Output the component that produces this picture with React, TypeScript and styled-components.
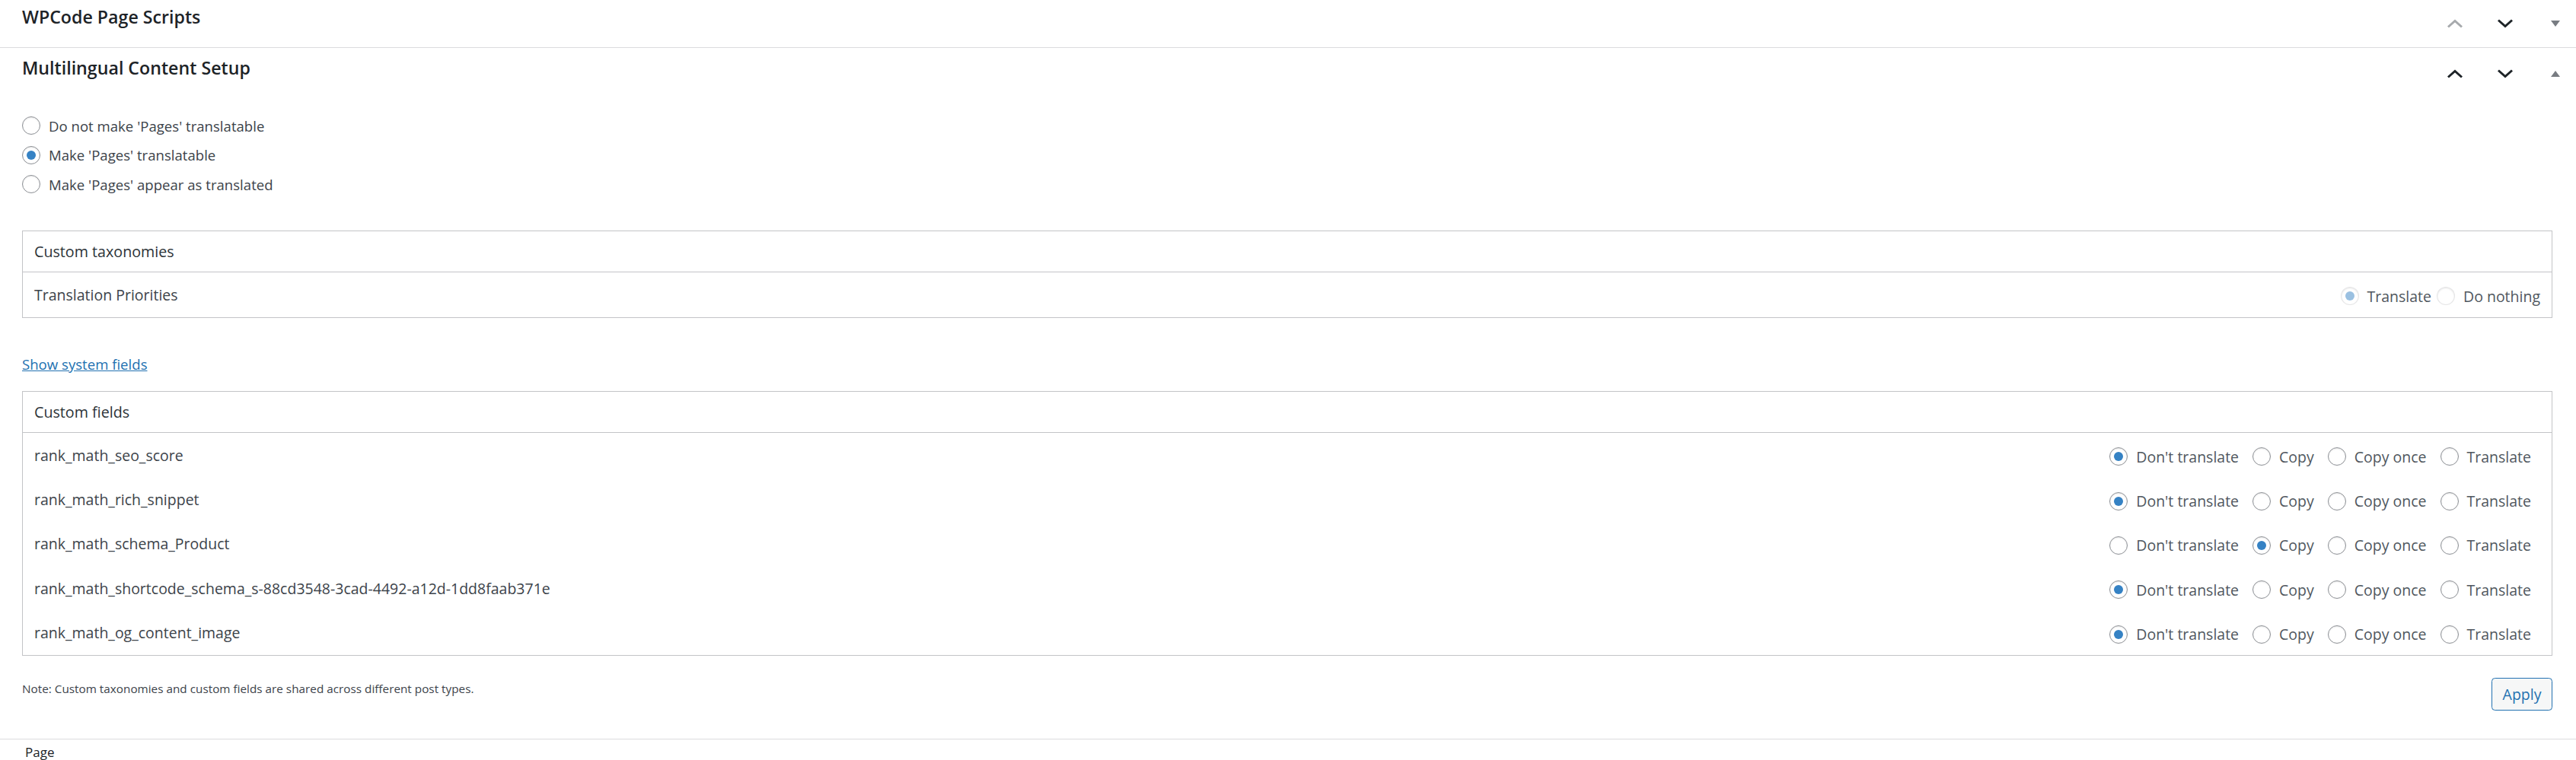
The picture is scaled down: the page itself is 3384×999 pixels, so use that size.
import React from "react";
import styled, { createGlobalStyle } from "styled-components";

const GlobalStyle = createGlobalStyle`
  html, body {
    margin: 0;
    padding: 0;
    background: #ffffff;
  }
  body {
    font-family: "Open Sans", "Noto Sans", sans-serif;
    color: #3c434a;
  }
`;

const Page = styled.div`
  width: 3384px;
  height: 999px;
  overflow: hidden;
  background: #ffffff;
`;

const Postbox = styled.section`
  border-bottom: 1px solid #dcdcde;
`;

const BoxHeader = styled.div<{ $height: number }>`
  display: flex;
  justify-content: space-between;
  align-items: center;
  height: ${(p) => p.$height}px;
`;

const BoxTitle = styled.h2<{ $top: number }>`
  align-self: flex-start;
  margin: ${(p) => p.$top}px 0 0;
  padding-left: 29px;
  font-size: 23.2px;
  line-height: 30px;
  font-weight: 600;
  color: #1d2327;
`;

const HandleActions = styled.div`
  display: flex;
  align-items: center;
  height: 100%;
`;

const HandleButton = styled.button<{ $width: number; $gap?: number }>`
  display: flex;
  align-items: center;
  justify-content: center;
  width: ${(p) => p.$width}px;
  height: 100%;
  margin-left: ${(p) => p.$gap ?? 0}px;
  padding: 0;
  border: 0;
  background: transparent;
  cursor: pointer;
`;

const Inside = styled.div`
  padding: 0 31px 37px 29px;
`;

const RadioList = styled.div`
  display: flex;
  flex-direction: column;
  margin-top: 16px;
`;

const OptionRow = styled.label`
  display: flex;
  align-items: center;
  height: 38.5px;
  gap: 11px;
  font-size: 18.6px;
  color: #3c434a;
`;

const RadioCircle = styled.span<{ $checked?: boolean; $disabled?: boolean }>`
  position: relative;
  flex: none;
  width: 24px;
  height: 24px;
  box-sizing: border-box;
  border-radius: 50%;
  border: 1px solid
    ${(p) => (p.$disabled ? "rgba(220, 220, 222, 0.75)" : "#8c8f94")};
  background: #ffffff;
  box-shadow: inset 0 1px 2px rgba(0, 0, 0, 0.1);

  &::before {
    content: "";
    display: ${(p) => (p.$checked ? "block" : "none")};
    position: absolute;
    left: 5px;
    top: 5px;
    width: 12px;
    height: 12px;
    border-radius: 50%;
    background: #3582c4;
    opacity: ${(p) => (p.$disabled ? 0.5 : 1)};
  }
`;

const Table = styled.div<{ $top: number }>`
  margin-top: ${(p) => p.$top}px;
  border: 1px solid #c3c4c7;
`;

const TableHead = styled.div`
  display: flex;
  align-items: center;
  height: 53px;
  padding-left: 15px;
  border-bottom: 1px solid #c3c4c7;
  font-size: 19.7px;
  color: #2c3338;
`;

const TableRow = styled.div<{ $height: number; $right: number }>`
  display: flex;
  align-items: center;
  justify-content: space-between;
  height: ${(p) => p.$height}px;
  padding: 0 ${(p) => p.$right}px 0 15px;
  font-size: 19.5px;
  color: #3c434a;
`;

const ChoiceGroup = styled.div<{ $gap: number; $shift: number }>`
  display: flex;
  align-items: center;
  gap: ${(p) => p.$gap}px;
  padding-top: ${(p) => p.$shift}px;
`;

const Choice = styled.label`
  display: flex;
  align-items: center;
  gap: 11px;
  font-size: 19.5px;
  color: #50575e;
`;

const ToggleLink = styled.a`
  display: block;
  width: max-content;
  margin-top: 46px;
  font-size: 18.6px;
  line-height: 30px;
  color: #2271b1;
  text-decoration: underline;
  cursor: pointer;
`;

const Footer = styled.div`
  display: flex;
  justify-content: space-between;
  align-items: flex-start;
  margin-top: 29px;
`;

const Note = styled.p`
  margin: 0;
  font-size: 15.3px;
  line-height: 28px;
  color: #3c434a;
`;

const ApplyButton = styled.button`
  width: 80px;
  height: 43px;
  padding: 0;
  border: 1px solid #2271b1;
  border-radius: 4.5px;
  background: #f6f7f7;
  color: #2271b1;
  font-family: inherit;
  font-size: 19.5px;
  cursor: pointer;
`;

const NextLabel = styled.div`
  padding: 7px 0 0 33px;
  font-size: 17px;
  line-height: 20px;
  color: #1d2327;
`;

const Chevron = ({ up, muted }: { up?: boolean; muted?: boolean }) => (
  <svg width="22" height="12" viewBox="0 0 22 12" aria-hidden="true">
    <polyline
      points={up ? "2,10.5 11,2.5 20,10.5" : "2,1.5 11,9.5 20,1.5"}
      fill="none"
      stroke={muted ? "#a7aaad" : "#1d2327"}
      strokeWidth="3"
    />
  </svg>
);

const Caret = ({ up }: { up?: boolean }) => (
  <svg width="12" height="8" viewBox="0 0 12 8" aria-hidden="true">
    <polygon points={up ? "0,8 12,8 6,0" : "0,0 12,0 6,8"} fill="#787c82" />
  </svg>
);

const Radio = ({ checked, disabled }: { checked?: boolean; disabled?: boolean }) => (
  <RadioCircle $checked={checked} $disabled={disabled} />
);

const Handles = ({ firstMuted, open }: { firstMuted?: boolean; open?: boolean }) => (
  <HandleActions>
    <HandleButton $width={66} aria-label="Move up">
      <Chevron up muted={firstMuted} />
    </HandleButton>
    <HandleButton $width={66} aria-label="Move down">
      <Chevron />
    </HandleButton>
    <HandleButton $width={54} $gap={6} aria-label="Toggle panel">
      <Caret up={open} />
    </HandleButton>
  </HandleActions>
);

const modes = [
  { label: "Do not make 'Pages' translatable", checked: false },
  { label: "Make 'Pages' translatable", checked: true },
  { label: "Make 'Pages' appear as translated", checked: false },
];

const fieldOptions = ["Don't translate", "Copy", "Copy once", "Translate"];

const fields = [
  { name: "rank_math_seo_score", value: 0 },
  { name: "rank_math_rich_snippet", value: 0 },
  { name: "rank_math_schema_Product", value: 1 },
  { name: "rank_math_shortcode_schema_s-88cd3548-3cad-4492-a12d-1dd8faab371e", value: 0 },
  { name: "rank_math_og_content_image", value: 0 },
];

export default function App() {
  return (
    <Page>
      <GlobalStyle />
      <Postbox>
        <BoxHeader $height={62}>
          <BoxTitle $top={7}>WPCode Page Scripts</BoxTitle>
          <Handles firstMuted />
        </BoxHeader>
      </Postbox>

      <Postbox>
        <BoxHeader $height={67}>
          <BoxTitle $top={11}>Multilingual Content Setup</BoxTitle>
          <Handles open />
        </BoxHeader>
        <Inside>
          <RadioList>
            {modes.map((m) => (
              <OptionRow key={m.label}>
                <Radio checked={m.checked} />
                {m.label}
              </OptionRow>
            ))}
          </RadioList>

          <Table $top={41.5}>
            <TableHead>Custom taxonomies</TableHead>
            <TableRow $height={59} $right={15}>
              <span>Translation Priorities</span>
              <ChoiceGroup $gap={7} $shift={3}>
                <Choice>
                  <Radio checked disabled />
                  Translate
                </Choice>
                <Choice>
                  <Radio disabled />
                  Do nothing
                </Choice>
              </ChoiceGroup>
            </TableRow>
          </Table>

          <ToggleLink>Show system fields</ToggleLink>

          <Table $top={20}>
            <TableHead>Custom fields</TableHead>
            {fields.map((f) => (
              <TableRow key={f.name} $height={58.4} $right={27}>
                <span>{f.name}</span>
                <ChoiceGroup $gap={18} $shift={4}>
                  {fieldOptions.map((o, i) => (
                    <Choice key={o}>
                      <Radio checked={i === f.value} />
                      {o}
                    </Choice>
                  ))}
                </ChoiceGroup>
              </TableRow>
            ))}
          </Table>

          <Footer>
            <Note>Note: Custom taxonomies and custom fields are shared across different post types.</Note>
            <ApplyButton>Apply</ApplyButton>
          </Footer>
        </Inside>
      </Postbox>

      <NextLabel>Page</NextLabel>
    </Page>
  );
}
